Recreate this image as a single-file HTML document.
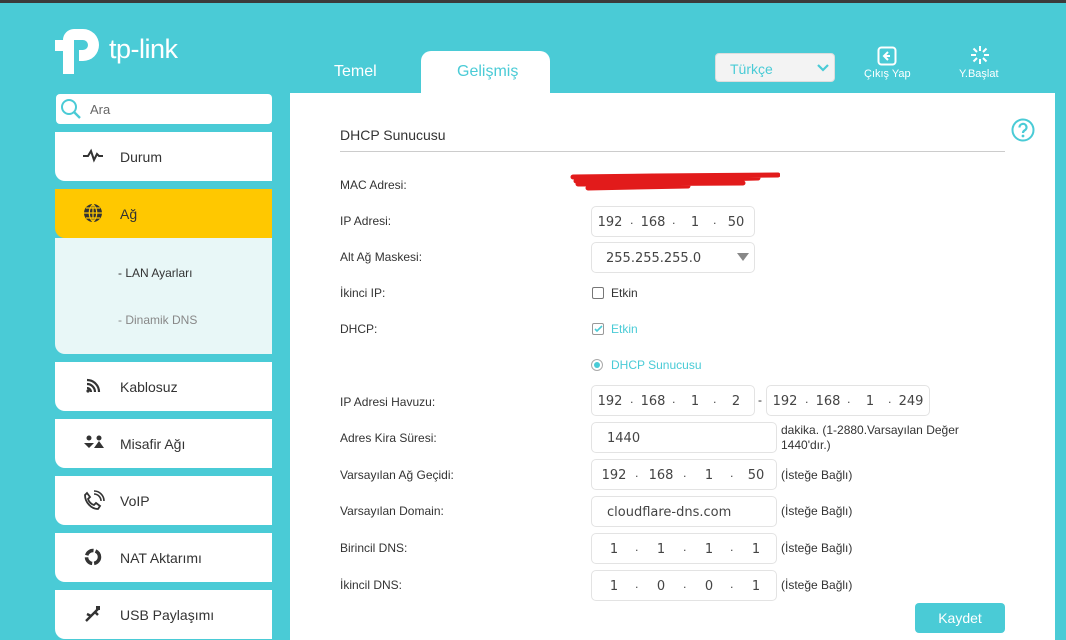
<!DOCTYPE html>
<html><head><meta charset="utf-8"><style>
*{margin:0;padding:0;box-sizing:border-box}
body{width:1066px;height:640px;overflow:hidden;background:#4acbd6;font-family:"Liberation Sans",Arial,sans-serif;position:relative;color:#333}
.a{position:absolute}
.top{left:0;top:0;width:1066px;height:3px;background:#3b3b3b}
.nav{left:55px;width:217px;height:49px;background:#fff;border-bottom-left-radius:10px;font-size:14px;color:#333}
.nav span{position:absolute;left:65px;top:17px}
.nav svg{position:absolute;left:28px;top:14px}
.panel{left:290px;top:93px;width:765px;height:547px;background:#fff}
.lbl{left:340px;font-size:12px;color:#333}
.box{border:1px solid #e3e3e3;border-radius:5px;height:31px;background:#fff;font-size:13px;color:#444;font-family:"DejaVu Sans",sans-serif}
.box i{position:absolute;top:8px;font-style:normal;width:30px;text-align:center}
.box b{position:absolute;top:7px;font-weight:normal;font-size:11px}
.opt{font-size:12px;color:#333}
</style></head><body>
<div class="a top"></div>
<svg class="a" style="left:55px;top:25px" width="50" height="50" viewBox="0 0 50 50"><path d="M19 4 h9 a16 16 0 0 1 0 32 h-4 v-11 h4 a5 5 0 0 0 0-10 h-9 v34 h-11 v-23 h-8 v-11 h8 a11 11 0 0 1 11-11z" fill="#fff"/></svg>
<div class="a" style="left:109px;top:34px;color:#fff;font-size:27px;letter-spacing:-0.5px">tp-link</div>
<div class="a" style="left:334px;top:63px;color:#fff;font-size:16px">Temel</div>
<div class="a" style="left:421px;top:51px;width:129px;height:44px;background:#fff;border-radius:10px 10px 0 0"></div>
<div class="a" style="left:457px;top:63px;color:#4acbd6;font-size:16px">Gelişmiş</div>
<div class="a" style="left:715px;top:53px;width:120px;height:29px;background:#f3f3f3;border:1px solid #ddd;border-radius:4px"></div>
<div class="a" style="left:730px;top:61px;color:#4acbd6;font-size:14px">Türkçe</div>
<svg class="a" style="left:817px;top:64px" width="12" height="8"><path d="M1 1 L6 6 L11 1" stroke="#4acbd6" stroke-width="2.2" fill="none"/></svg>
<svg class="a" style="left:877px;top:46px" width="20" height="20"><rect x="1.5" y="1.5" width="17" height="17" rx="3" fill="none" stroke="#fff" stroke-width="2"/><path d="M11 6 L7 10 L11 14 M8 10 H13" stroke="#fff" stroke-width="2" fill="none"/></svg>
<div class="a" style="left:864px;top:68px;color:#fff;font-size:11px">Çıkış Yap</div>
<svg class="a" style="left:970px;top:45px" width="20" height="20" stroke="#fff" stroke-width="2"><path d="M10 1v5M10 14v5M1 10h5M14 10h5M3.5 3.5l3.5 3.5M13 13l3.5 3.5M16.5 3.5L13 7M7 13l-3.5 3.5"/></svg>
<div class="a" style="left:959px;top:68px;color:#fff;font-size:11px">Y.Başlat</div>
<div class="a" style="left:56px;top:94px;width:216px;height:30px;background:#fff;border-radius:4px"></div>
<svg class="a" style="left:60px;top:98px" width="22" height="22"><circle cx="9" cy="9" r="7" stroke="#4acbd6" stroke-width="2" fill="none"/><path d="M14 14l6 6" stroke="#4acbd6" stroke-width="2.4"/></svg>
<div class="a" style="left:90px;top:102px;font-size:13px;color:#666">Ara</div>
<div class="a nav" style="top:132px"><svg width="20" height="20"><path d="M0 10h5l3-5 3 9 3-6 2 2h4" stroke="#333" stroke-width="2" fill="none"/></svg><span>Durum</span></div>
<div class="a nav" style="top:189px;background:#ffc800"><svg width="20" height="20"><circle cx="10" cy="10" r="9" fill="#333"/><path d="M1 10h18M10 1v18M3 5h14M3 15h14M10 1c-5 5-5 13 0 18M10 1c5 5 5 13 0 18" stroke="#ffc800" stroke-width="1.2" fill="none"/></svg><span>Ağ</span></div>
<div class="a" style="left:55px;top:238px;width:217px;height:116px;background:#e8f7f7;border-bottom-left-radius:10px"></div>
<div class="a" style="left:118px;top:266px;font-size:12px;color:#333">- LAN Ayarları</div>
<div class="a" style="left:118px;top:313px;font-size:12px;color:#888">- Dinamik DNS</div>
<div class="a nav" style="top:362px"><svg width="20" height="20"><path d="M4 4a12 12 0 0 1 12 12M4 8a8 8 0 0 1 8 8M4 12a4 4 0 0 1 4 4" stroke="#333" stroke-width="2.2" fill="none"/><circle cx="5" cy="15" r="1.6" fill="#333"/></svg><span>Kablosuz</span></div>
<div class="a nav" style="top:419px"><svg width="22" height="20"><circle cx="6" cy="5" r="2.5" fill="#333"/><circle cx="16" cy="5" r="2.5" fill="#333"/><path d="M1 10h10l-5 5zM11 15l5-7 5 7z" fill="#333"/></svg><span>Misafir Ağı</span></div>
<div class="a nav" style="top:476px"><svg width="22" height="22"><path d="M4 3l3 4-2 2c1 3 3 5 6 6l2-2 4 3-2 3C8 19 2 12 2 5z" stroke="#333" stroke-width="1.8" fill="none"/><path d="M11 4a7 7 0 0 1 7 7M11 1a10 10 0 0 1 10 10" stroke="#333" stroke-width="1.6" fill="none"/></svg><span>VoIP</span></div>
<div class="a nav" style="top:533px"><svg width="20" height="20"><circle cx="10" cy="10" r="6.5" stroke="#333" stroke-width="3.5" fill="none" stroke-dasharray="9 2"/></svg><span>NAT Aktarımı</span></div>
<div class="a nav" style="top:590px"><svg width="20" height="20"><path d="M3 17l12-12M8 12l-4-2M12 8l3 3" stroke="#333" stroke-width="2.4" fill="none"/><rect x="13" y="2" width="4" height="4" fill="#333"/></svg><span>USB Paylaşımı</span></div>
<div class="a panel"></div>
<div class="a" style="left:340px;top:127px;font-size:14px;color:#333">DHCP Sunucusu</div>
<div class="a" style="left:340px;top:151px;width:665px;height:1px;background:#ccc"></div>
<svg class="a" style="left:1011px;top:118px" width="24" height="24"><circle cx="12" cy="12" r="10.5" stroke="#4acbd6" stroke-width="2" fill="none"/><path d="M8.5 9.5a3.5 3.5 0 1 1 5 3c-1.2.7-1.5 1.3-1.5 2.5" stroke="#4acbd6" stroke-width="2.2" fill="none"/><circle cx="12" cy="18" r="1.4" fill="#4acbd6"/></svg>

<div class="a lbl" style="top:178px">MAC Adresi:</div>
<svg class="a" style="left:568px;top:170px" width="212" height="25"><path d="M5 7 L85 6 L210 5 M8 11 L150 9 L190 8 M10 14 L175 13 M20 18 L120 16" stroke="#e21b1b" stroke-width="5" stroke-linecap="round" fill="none"/></svg>
<div class="a lbl" style="top:214px">IP Adresi:</div>
<div class="a lbl" style="top:250px">Alt Ağ Maskesi:</div>
<div class="a lbl" style="top:286px">İkinci IP:</div>
<div class="a lbl" style="top:322px">DHCP:</div>
<div class="a lbl" style="top:395px">IP Adresi Havuzu:</div>
<div class="a lbl" style="top:431px">Adres Kira Süresi:</div>
<div class="a lbl" style="top:468px">Varsayılan Ağ Geçidi:</div>
<div class="a lbl" style="top:504px">Varsayılan Domain:</div>
<div class="a lbl" style="top:541px">Birincil DNS:</div>
<div class="a lbl" style="top:578px">İkincil DNS:</div>

<div class="a box" style="left:591px;top:206px;width:164px"><i style="left:3px">192</i><b style="left:38px">.</b><i style="left:46px">168</i><b style="left:80px">.</b><i style="left:88px">1</i><b style="left:121px">.</b><i style="left:129px">50</i></div>
<div class="a box" style="left:591px;top:242px;width:164px"><i style="left:14px;width:auto">255.255.255.0</i></div>
<svg class="a" style="left:737px;top:253px" width="12" height="8"><path d="M0 0h12L6 8z" fill="#888"/></svg>
<div class="a" style="left:592px;top:287px;width:12px;height:12px;border:1px solid #777;border-radius:2px"></div>
<div class="a opt" style="left:611px;top:286px">Etkin</div>
<div class="a" style="left:592px;top:323px;width:12px;height:12px;border:1px solid #999;border-radius:2px"></div>
<svg class="a" style="left:594px;top:325px" width="9" height="8"><path d="M1 4l2 2 5-5" stroke="#4acbd6" stroke-width="1.6" fill="none"/></svg>
<div class="a opt" style="left:611px;top:322px;color:#4acbd6">Etkin</div>
<div class="a" style="left:591px;top:359px;width:12px;height:12px;border:1px solid #aaa;border-radius:50%"></div>
<div class="a" style="left:594px;top:362px;width:6px;height:6px;background:#4acbd6;border-radius:50%"></div>
<div class="a opt" style="left:611px;top:358px;color:#4acbd6">DHCP Sunucusu</div>

<div class="a box" style="left:591px;top:385px;width:164px"><i style="left:3px">192</i><b style="left:38px">.</b><i style="left:46px">168</i><b style="left:80px">.</b><i style="left:88px">1</i><b style="left:121px">.</b><i style="left:129px">2</i></div>
<div class="a" style="left:758px;top:393px;font-size:12px">-</div>
<div class="a box" style="left:766px;top:385px;width:164px"><i style="left:3px">192</i><b style="left:38px">.</b><i style="left:46px">168</i><b style="left:80px">.</b><i style="left:88px">1</i><b style="left:121px">.</b><i style="left:129px">249</i></div>

<div class="a box" style="left:591px;top:422px;width:186px"><i style="left:15px;width:auto">1440</i></div>
<div class="a opt" style="left:781px;top:423px;line-height:15px">dakika. (1-2880.Varsayılan Değer<br>1440'dır.)</div>
<div class="a box" style="left:591px;top:459px;width:186px"><i style="left:7px">192</i><b style="left:43px">.</b><i style="left:54px">168</i><b style="left:91px">.</b><i style="left:102px">1</i><b style="left:138px">.</b><i style="left:149px">50</i></div>
<div class="a opt" style="left:781px;top:468px">(İsteğe Bağlı)</div>
<div class="a box" style="left:591px;top:496px;width:186px"><i style="left:15px;width:auto">cloudflare-dns.com</i></div>
<div class="a opt" style="left:781px;top:504px">(İsteğe Bağlı)</div>
<div class="a box" style="left:591px;top:533px;width:186px"><i style="left:7px">1</i><b style="left:43px">.</b><i style="left:54px">1</i><b style="left:91px">.</b><i style="left:102px">1</i><b style="left:138px">.</b><i style="left:149px">1</i></div>
<div class="a opt" style="left:781px;top:541px">(İsteğe Bağlı)</div>
<div class="a box" style="left:591px;top:570px;width:186px"><i style="left:7px">1</i><b style="left:43px">.</b><i style="left:54px">0</i><b style="left:91px">.</b><i style="left:102px">0</i><b style="left:138px">.</b><i style="left:149px">1</i></div>
<div class="a opt" style="left:781px;top:578px">(İsteğe Bağlı)</div>

<div class="a" style="left:915px;top:603px;width:90px;height:30px;background:#4acbd6;border-radius:4px;color:#fff;font-size:14px;text-align:center;line-height:30px">Kaydet</div>
</body></html>
